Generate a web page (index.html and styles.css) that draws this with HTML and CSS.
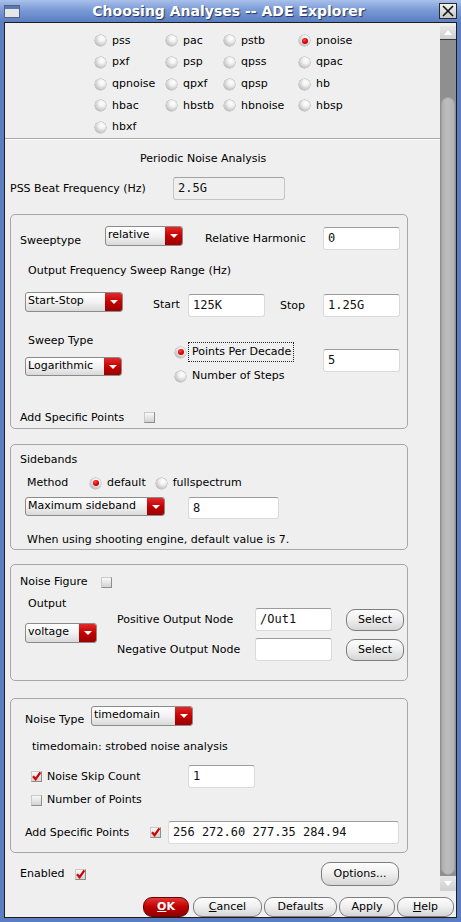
FILE: index.html
```html
<!DOCTYPE html>
<html>
<head>
<meta charset="utf-8">
<link rel="stylesheet" href="styles.css">
</head>
<body>
<div class="window">
  <div class="titlebar">
    <svg class="winicon" width="16" height="13" viewBox="0 0 16 13"><rect x="0.5" y="0.5" width="15" height="12" fill="#e4e6ea" stroke="#56607a"/><rect x="1" y="1" width="14" height="3" fill="#5a79b4"/></svg>
    <div class="title">Choosing Analyses -- ADE Explorer</div>
    <div class="close"><svg width="16" height="14" viewBox="0 0 16 14"><path d="M3 2 L13 12 M13 2 L3 12" stroke="#111" stroke-width="1.6"/></svg></div>
  </div>
  <div class="frame">
    <div class="panel">
      <div class="body">
        <div class="content">
          <div class="radios">
            <label class="opt"><span class="radio"></span>pss</label>
            <label class="opt"><span class="radio"></span>pac</label>
            <label class="opt"><span class="radio"></span>pstb</label>
            <label class="opt"><span class="radio on"></span>pnoise</label>
            <label class="opt"><span class="radio"></span>pxf</label>
            <label class="opt"><span class="radio"></span>psp</label>
            <label class="opt"><span class="radio"></span>qpss</label>
            <label class="opt"><span class="radio"></span>qpac</label>
            <label class="opt"><span class="radio"></span>qpnoise</label>
            <label class="opt"><span class="radio"></span>qpxf</label>
            <label class="opt"><span class="radio"></span>qpsp</label>
            <label class="opt"><span class="radio"></span>hb</label>
            <label class="opt"><span class="radio"></span>hbac</label>
            <label class="opt"><span class="radio"></span>hbstb</label>
            <label class="opt"><span class="radio"></span>hbnoise</label>
            <label class="opt"><span class="radio"></span>hbsp</label>
            <label class="opt"><span class="radio"></span>hbxf</label>
          </div>
          <div class="sep"></div>
          <div class="heading">Periodic Noise Analysis</div>
          <div class="pss-row">
            <span class="pss-label">PSS Beat Frequency (Hz)</span>
            <div class="field disabled pss-field">2.5G</div>
          </div>

          <div class="group g1">
            <div class="row sweep-row">
              <span class="lbl sweep-lbl">Sweeptype</span>
              <div class="combo w78"><span class="combo-text">relative</span><span class="combo-arrow"></span></div>
              <span class="lbl harm-lbl">Relative Harmonic</span>
              <div class="field w77 harm-field">0</div>
            </div>
            <div class="lbl range-lbl">Output Frequency Sweep Range (Hz)</div>
            <div class="row range-row">
              <div class="combo w98 ml5"><span class="combo-text">Start-Stop</span><span class="combo-arrow"></span></div>
              <span class="lbl start-lbl">Start</span>
              <div class="field w77 range-field">125K</div>
              <span class="lbl stop-lbl">Stop</span>
              <div class="field w77 range-field">1.25G</div>
            </div>
            <div class="row type-block">
              <div class="type-left">
                <div class="lbl ml3">Sweep Type</div>
                <div class="combo w97 type-combo"><span class="combo-text">Logarithmic</span><span class="combo-arrow"></span></div>
              </div>
              <div class="type-mid">
                <div class="ropt"><span class="radio on"></span><span class="rtext focus">Points Per Decade</span></div>
                <div class="ropt"><span class="radio"></span><span class="rtext">Number of Steps</span></div>
              </div>
              <div class="field w77 ppd-field">5</div>
            </div>
            <div class="row add-row">
              <span class="lbl add-lbl">Add Specific Points</span>
              <span class="check add-check"></span>
            </div>
          </div>

          <div class="group g2">
            <div class="lbl side-title">Sidebands</div>
            <div class="row method-row">
              <span class="lbl method-lbl">Method</span>
              <span class="radio on"></span><span class="lbl ml6">default</span>
              <span class="radio ml10"></span><span class="lbl ml6">fullspectrum</span>
            </div>
            <div class="row sb-row">
              <div class="combo w140 ml5 h19"><span class="combo-text">Maximum sideband</span><span class="combo-arrow"></span></div>
              <div class="field sb-field">8</div>
            </div>
            <div class="lbl note">When using shooting engine, default value is 7.</div>
          </div>

          <div class="group g3">
            <div class="row nf-row">
              <span class="lbl nf-lbl">Noise Figure</span>
              <span class="check nf-check"></span>
            </div>
            <div class="row out-block">
              <div class="out-left">
                <div class="lbl ml3">Output</div>
                <div class="combo w72 out-combo"><span class="combo-text">voltage</span><span class="combo-arrow"></span></div>
              </div>
              <div class="node-grid">
                <span class="lbl">Positive Output Node</span>
                <div class="field w77">/Out1</div>
                <div class="btn sel-btn">Select</div>
                <span class="lbl">Negative Output Node</span>
                <div class="field w77"></div>
                <div class="btn sel-btn">Select</div>
              </div>
            </div>
          </div>

          <div class="group g4">
            <div class="row nt-row">
              <span class="lbl nt-lbl">Noise Type</span>
              <div class="combo w102"><span class="combo-text">timedomain</span><span class="combo-arrow"></span></div>
            </div>
            <div class="lbl td-note">timedomain: strobed noise analysis</div>
            <div class="row skip-row">
              <span class="check on ml11"><svg width="11" height="11" viewBox="0 0 11 11"><path d="M2 5.2 L4.6 8.2 L9.4 1.4" fill="none" stroke="#d40000" stroke-width="2.2"/></svg></span>
              <span class="lbl skip-lbl">Noise Skip Count</span>
              <div class="field skip-field">1</div>
            </div>
            <div class="row np-row">
              <span class="check ml11"></span>
              <span class="lbl ml5">Number of Points</span>
            </div>
            <div class="row asp-row">
              <span class="lbl asp-lbl">Add Specific Points</span>
              <span class="check on"><svg width="11" height="11" viewBox="0 0 11 11"><path d="M2 5.2 L4.6 8.2 L9.4 1.4" fill="none" stroke="#d40000" stroke-width="2.2"/></svg></span>
              <div class="field asp-field">256 272.60 277.35 284.94</div>
            </div>
          </div>

          <div class="row en-row">
            <span class="lbl en-lbl">Enabled</span>
            <span class="check on"><svg width="11" height="11" viewBox="0 0 11 11"><path d="M2 5.2 L4.6 8.2 L9.4 1.4" fill="none" stroke="#d40000" stroke-width="2.2"/></svg></span>
            <div class="btn opt-btn">Options...</div>
          </div>
        </div>
        <div class="scrollbar">
          <div class="sb-arrow up"><span class="tri-up"></span></div>
          <div class="sb-track">
            <div class="sb-thumb"></div>
          </div>
          <div class="sb-arrow down"><span class="tri-down"></span></div>
        </div>
      </div>
      <div class="buttons">
        <div class="btn ok-btn"><u>O</u>K</div>
        <div class="btn cancel-btn"><u>C</u>ancel</div>
        <div class="btn def-btn">Defaults</div>
        <div class="btn apply-btn">Apply</div>
        <div class="btn help-btn"><u>H</u>elp</div>
      </div>
    </div>
  </div>
</div>
</body>
</html>
```

FILE: styles.css
```css
* { box-sizing: border-box; }
html, body { margin: 0; padding: 0; }
body {
  width: 461px;
  height: 922px;
  overflow: hidden;
  font-family: "DejaVu Sans", "Liberation Sans", sans-serif;
  font-size: 11px;
  color: #000;
}
.window {
  width: 461px;
  height: 922px;
  display: flex;
  flex-direction: column;
  background: #5b7dc1;
}
.titlebar {
  height: 22px;
  flex: none;
  display: flex;
  align-items: center;
  background: linear-gradient(#a9c0ea, #7a9bd6 45%, #5b7ec3);
}
.winicon { margin-left: 4px; flex: none; }
.title {
  flex: 1;
  text-align: center;
  font-weight: bold;
  font-size: 14px;
  line-height: 22px;
  color: #fff;
  text-shadow: 1px 1px 1px #26365e;
  padding-right: 2px;
}
.close {
  width: 18px;
  height: 16px;
  margin-right: 4px;
  border: 1px solid #2a2a2a;
  background: linear-gradient(#f2f2f2, #c6c6c6);
  display: flex;
  align-items: center;
  justify-content: center;
}
.close svg { display: block; }
.frame {
  flex: 1;
  display: flex;
  padding: 0 4px 4px 4px;
}
.panel {
  flex: 1;
  border: 1px solid #1d1d1d;
  background: #efefef;
  display: flex;
  flex-direction: column;
}
.body {
  display: flex;
  height: 870px;
}
.content {
  width: 435px;
  flex: none;
}
.lbl { line-height: 14px; white-space: nowrap; }
.row { display: flex; align-items: flex-start; }

/* radio grid */
.radios {
  display: grid;
  grid-template-columns: 71px 58px 75px 60px;
  grid-auto-rows: 21.65px;
  margin-left: 90px;
  padding-top: 7px;
  align-items: center;
}
.opt { display: flex; align-items: center; gap: 6px; line-height: 14px; }
.radio {
  width: 11px;
  height: 11px;
  border-radius: 50%;
  flex: none;
  position: relative;
  background: radial-gradient(circle at 62% 32%, #ffffff 0, #f2f2f2 30%, #c6c6c6 70%, #9a9a9a 100%);
  box-shadow: 0 0 0 0.5px #a8a8a8;
}
.radio.on::after {
  content: "";
  position: absolute;
  left: 2.5px;
  top: 2.5px;
  width: 6px;
  height: 6px;
  border-radius: 50%;
  background: radial-gradient(circle at 40% 35%, #ff4a4a 0, #e00000 50%, #980000 100%);
}
.sep {
  height: 2px;
  border-top: 1px solid #a9a9a9;
  border-bottom: 1px solid #ffffff;
}
.heading {
  margin-top: 12px;
  padding-left: 135px;
  line-height: 14px;
}
.pss-row {
  margin-top: 11px;
  display: flex;
  align-items: center;
  padding-left: 5px;
}
.pss-label { width: 163px; line-height: 14px; }

/* inputs */
.field {
  height: 23px;
  background: #fff;
  border: 1px solid #dadada;
  border-top-color: #9c9c9c;
  border-radius: 3px;
  font-family: "DejaVu Sans Mono", monospace;
  font-size: 12px;
  line-height: 21px;
  padding-left: 4px;
  flex: none;
  white-space: nowrap;
  color: #111;
}
.field.disabled { background: #efefef; border-color: #c4c4c4; border-top-color: #a4a4a4; }
.pss-field { width: 112px; }
.w77 { width: 77px; }

/* combos */
.combo {
  display: flex;
  height: 20px;
  border: 1px solid #8b8b8b;
  border-radius: 3px;
  background: linear-gradient(#ffffff, #f2f2f2 50%, #d9d9d9);
  overflow: hidden;
  flex: none;
}
.combo.h19 { height: 19px; }
.combo-text {
  flex: 1;
  padding-left: 2px;
  line-height: 15px;
  white-space: nowrap;
}
.combo-arrow {
  width: 17px;
  flex: none;
  background: linear-gradient(#e22a2a, #c40000 50%, #9a0000);
  display: flex;
  align-items: center;
  justify-content: center;
}
.combo-arrow::before {
  content: "";
  width: 0;
  height: 0;
  border-left: 4px solid transparent;
  border-right: 4px solid transparent;
  border-top: 4px solid #fff;
}
.w72 { width: 72px; }
.w78 { width: 78px; }
.w97 { width: 97px; }
.w98 { width: 98px; }
.w102 { width: 102px; }
.w140 { width: 140px; }
.ml3 { margin-left: 3px; }
.ml5 { margin-left: 5px; }
.ml6 { margin-left: 6px; }
.ml10 { margin-left: 10px; }
.ml11 { margin-left: 11px; }

/* checkboxes */
.check {
  width: 11px;
  height: 11px;
  flex: none;
  border: 1px solid;
  border-color: #c9c9c9 #8d8d8d #8d8d8d #c9c9c9;
  background: linear-gradient(#f8f8f8, #d2d2d2);
  position: relative;
}
.check svg { position: absolute; left: -1px; top: -1px; }

/* groups */
.group {
  margin-left: 5px;
  width: 398px;
  border: 1px solid #a7a7a7;
  border-radius: 5px;
  padding-left: 9px;
}
.g1 { margin-top: 14px; height: 215px; }
.g2 { margin-top: 15px; height: 106px; }
.g3 { margin-top: 14px; height: 117px; }
.g4 { margin-top: 17px; height: 155px; }

.sweep-row { margin-top: 11px; height: 25px; }
.sweep-lbl { width: 85px; margin-top: 8px; }
.harm-lbl { width: 118px; margin-left: 22px; margin-top: 6px; }
.harm-field { margin-top: 1px; }
.range-lbl { margin-top: 13px; margin-left: 8px; }
.range-row { margin-top: 14px; height: 25px; }
.start-lbl { margin-left: 30px; width: 35px; margin-top: 6px; }
.stop-lbl { margin-left: 15px; width: 43px; margin-top: 7px; }
.range-field { margin-top: 2px; }
.type-block { margin-top: 17px; }
.type-left { width: 150px; margin-left: 5px; }
.type-combo { margin-top: 9px; height: 19px; }
.type-mid { width: 148px; margin-top: 8px; display: flex; flex-direction: column; gap: 4px; }
.ropt { display: flex; align-items: center; height: 20px; }
.rtext {
  margin-left: 2px;
  border: 1px dotted transparent;
  padding: 0 2px 0 3px;
  line-height: 18px;
  white-space: nowrap;
}
.rtext.focus { border-color: #222; }
.ppd-field { margin-top: 15px; }
.add-row { margin-top: 25px; }
.add-lbl { width: 124px; }
.add-check { margin-top: 1px; }

.side-title { margin-top: 8px; }
.method-row { margin-top: 8px; height: 16px; align-items: center; }
.method-lbl { width: 63px; margin-left: 7px; }
.sb-row { margin-top: 6px; }
.sb-field { width: 91px; height: 22px; margin-left: 23px; }
.note { margin-top: 14px; margin-left: 7px; }

.nf-row { margin-top: 10px; }
.nf-lbl { width: 81px; }
.nf-check { margin-top: 2px; }
.out-block { margin-top: 8px; }
.out-left { width: 92px; margin-left: 5px; }
.out-combo { margin-top: 12px; }
.node-grid {
  margin-top: 11px;
  display: grid;
  grid-template-columns: 138px 77px 72px;
  grid-auto-rows: 23px;
  row-gap: 7px;
  align-items: center;
}
.sel-btn { margin-left: 14px; width: 58px; height: 22px; }

.nt-row { margin-top: 7px; }
.nt-lbl { width: 66px; margin-left: 5px; margin-top: 7px; }
.td-note { margin-top: 13px; margin-left: 12px; }
.skip-row { margin-top: 11px; height: 23px; align-items: center; }
.skip-lbl { margin-left: 5px; width: 141px; }
.skip-field { width: 67px; }
.np-row { margin-top: 4px; height: 16px; align-items: center; }
.asp-row { margin-top: 13px; height: 23px; align-items: center; }
.asp-lbl { width: 125px; margin-left: 5px; }
.asp-field { width: 231px; margin-left: 7px; }

.en-row { margin-top: 9px; height: 24px; align-items: center; }
.en-lbl { width: 55px; margin-left: 15px; }
.opt-btn { margin-left: 235px; width: 78px; height: 24px; }

/* buttons */
.btn {
  flex: none;
  display: flex;
  align-items: center;
  justify-content: center;
  border: 1px solid #7d7d7d;
  border-radius: 9px;
  background: linear-gradient(#fdfdfd, #f0f0f0 45%, #d6d6d6);
  line-height: 14px;
  white-space: nowrap;
}
.btn u { text-decoration: underline; text-underline-offset: 1px; }
.buttons {
  display: flex;
  padding-top: 4px;
  padding-left: 138px;
  gap: 2px;
}
.buttons .btn { height: 20px; }
.ok-btn {
  width: 46px;
  margin-right: 2px;
  background: linear-gradient(#e23535, #c00000 50%, #900000);
  border-color: #6a0000;
  color: #fff;
  font-weight: bold;
}
.cancel-btn { width: 69px; }
.def-btn { width: 73px; }
.apply-btn { width: 56px; }
.help-btn { width: 57px; }

/* scrollbar */
.scrollbar {
  width: 16px;
  flex: none;
  padding-top: 3px;
  display: flex;
  flex-direction: column;
}
.sb-arrow {
  height: 14px;
  flex: none;
  background: linear-gradient(#e6e6e6, #cfcfcf);
  display: flex;
  align-items: center;
  justify-content: center;
}
.sb-arrow.up { border-bottom: 1px solid #3a3a3a; }
.sb-arrow.down { height: 15px; }
.tri-up {
  width: 0; height: 0;
  border-left: 4px solid transparent;
  border-right: 4px solid transparent;
  border-bottom: 5px solid #fff;
}
.tri-down {
  width: 0; height: 0;
  border-left: 4px solid transparent;
  border-right: 4px solid transparent;
  border-top: 5px solid #fff;
}
.sb-track {
  height: 836px;
  flex: none;
  background: #8f8f8f;
  padding-top: 57px;
}
.sb-thumb {
  height: 778px;
  margin: 0 1px;
  border: 1px solid #a2a2a2;
  border-radius: 7px;
  background: linear-gradient(90deg, #b0b0b0, #bdbdbd 40%, #b3b3b3);
}
```
